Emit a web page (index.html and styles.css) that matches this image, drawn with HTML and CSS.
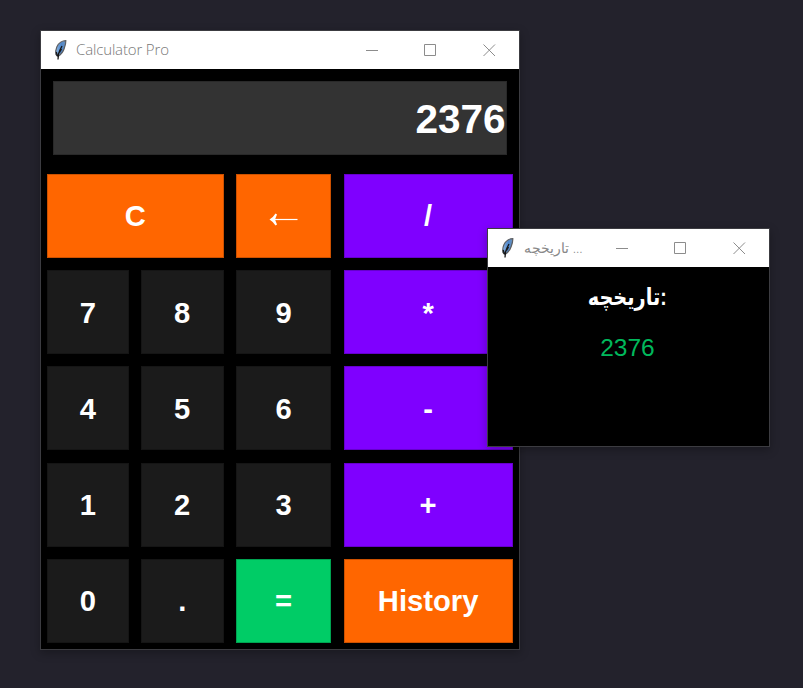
FILE: index.html
```html
<!DOCTYPE html>
<html lang="en">
<head>
<meta charset="utf-8">
<title>Calculator Pro</title>
<link rel="stylesheet" href="styles.css">
</head>
<body>
<svg class="defs" width="0" height="0">
  <defs>
    <linearGradient id="quill" x1="0" y1="0" x2="1" y2="0">
      <stop offset="0" stop-color="#8fb8e4"/><stop offset=".55" stop-color="#4d86cc"/><stop offset="1" stop-color="#6d93bb"/>
    </linearGradient>
    <symbol id="feather" viewBox="0 0 14 22">
      <path d="M12.800 1.700C9.500 1.700 5.500 4 3.800 8C2.700 10.500 2.500 13 2.900 15.500L5 17.500C8 15.500 10.300 12.500 11.200 9.500C12.300 6.500 12.900 4 12.800 1.700Z" fill="url(#quill)" stroke="#5c5e62" stroke-width="1.200"/>
      <path d="M9 7L7 11L5.500 15L5 20.500M3.300 13L4.300 17M8.500 10L6.500 13.500" fill="none" stroke="#161616" stroke-width="1.300"/>
    </symbol>
    <symbol id="controls" viewBox="0 0 130 13">
      <path d="M0 6.500H12M58.500 .5H69.500V11.500H58.500ZM117.500 .5L129 12M129 .5L117.500 12" fill="none" stroke="#8c8c8c"/>
    </symbol>
  </defs>
</svg>
<main class="desktop">
  <section class="window calculator">
    <header class="titlebar">
      <svg class="feather"><use href="#feather"/></svg>
      <span class="title">Calculator Pro</span>
      <svg class="controls"><use href="#controls"/></svg>
    </header>
    <div class="display">2376</div>
    <div class="keys">
      <button class="key orange wide">C</button>
      <button class="key orange" aria-label="Backspace"><svg class="arrow" viewBox="0 0 30 14"><path d="M2 7.500H28.500" fill="none" stroke="#fff" stroke-width="1.200"/><path d="M.5 7.500Q4.500 5 6.500 1.500L8 2.500L6 7.500L8 12.500L6.500 13.500Q4.500 10 .5 7.500Z" fill="#fff"/></svg></button>
      <button class="key purple">/</button>
      <button class="key">7</button><button class="key">8</button><button class="key">9</button><button class="key purple">*</button>
      <button class="key">4</button><button class="key">5</button><button class="key">6</button><button class="key purple">-</button>
      <button class="key">1</button><button class="key">2</button><button class="key">3</button><button class="key purple">+</button>
      <button class="key">0</button><button class="key">.</button><button class="key green">=</button><button class="key orange">History</button>
    </div>
  </section>
  <section class="window history">
    <header class="titlebar">
      <svg class="feather"><use href="#feather"/></svg>
      <span class="title fa"><bdi>تاریخچه</bdi> ...</span>
      <svg class="controls"><use href="#controls"/></svg>
    </header>
    <h2 class="heading"><bdi>تاریخچه</bdi>:</h2>
    <div class="entry">2376</div>
  </section>
</main>
</body>
</html>
```
FILE: styles.css
```css
* { box-sizing: border-box; }
body { margin: 0; background: #23222c; font-family: "Liberation Sans", Arial, sans-serif; }
.defs { position: absolute; }
.desktop { position: relative; width: 803px; height: 688px; overflow: hidden; }
.window { position: absolute; border: 1px solid #3c3c41; background: #000; box-shadow: 0 3px 9px rgba(0,0,0,.28); }
.calculator { left: 40px; top: 30px; width: 480px; height: 620px; }
.history { left: 487px; top: 228px; width: 283px; height: 219px; }
.titlebar { display: flex; align-items: center; height: 38px; padding: 0 23px 0 12px; background: #fff; }
.feather { width: 14px; height: 22px; flex: none; }
.title { margin-left: 9px; padding-bottom: 2px; font: 300 15px/36px "Open Sans", "Noto Sans", sans-serif; letter-spacing: -.15px; color: #777; white-space: nowrap; }
.controls { width: 130px; height: 13px; margin-left: auto; flex: none; }
.fa { margin-left: 10px; padding-bottom: 0; font-family: "Open Sans", "DejaVu Sans", sans-serif; font-size: 14px; letter-spacing: 0; color: #888; }
.display { height: 74px; margin: 12px 12px 0; padding-right: 1.5px; background: #333; box-shadow: inset 0 0 0 1px #292929; color: #fff; font-size: 40.5px; font-weight: bold; line-height: 76px; text-align: right; }
.keys { display: grid; grid-template-columns: 81.7px 82.7px 95.7px 169px; grid-auto-rows: 83.8px; gap: 12.45px 12.2px; margin: 19px 0 0 6px; }
.key { display: flex; align-items: center; justify-content: center; padding: 2px 0 0; border: 0; background: #1b1b1b; box-shadow: inset 0 0 0 1px rgba(0,0,0,.2); color: #fff; font: bold 29.2px/1 "Liberation Sans", Arial, sans-serif; }
.wide { grid-column: span 2; }
.orange { background: #ff6600; }
.purple { background: #7f00ff; }
.green { background: #00cc66; }
.arrow { width: 30px; height: 14px; margin: 4px 0 0 1px; }
.heading { margin: 15px 0 0; padding-right: 3px; font: bold 22px/32px "Liberation Sans", "DejaVu Sans", sans-serif; color: #fff; text-align: center; transform: scale(.88, 1.06); }
.entry { margin-top: 19px; padding-right: 2px; color: #00b85c; font-size: 24.5px; line-height: 29px; text-align: center; }
```
